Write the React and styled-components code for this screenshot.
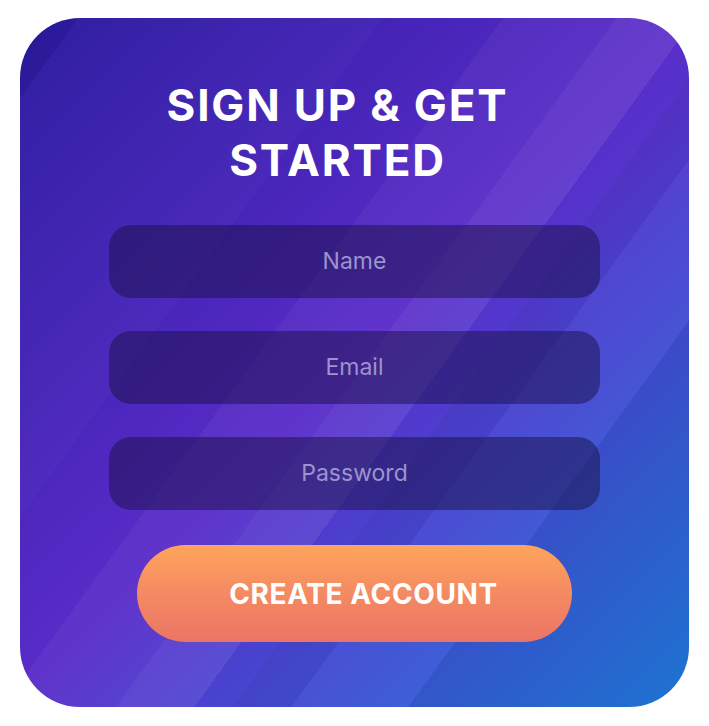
import React from "react";
import styled, { createGlobalStyle } from "styled-components";

const GlobalStyle = createGlobalStyle`
  html, body {
    margin: 0;
    padding: 0;
    background: #ffffff;
  }
  * {
    box-sizing: border-box;
  }
`;

const App = () => {
  return (
    <StPage>
      <GlobalStyle />
      <StCard>
        <StTitle>
          SIGN UP &amp; GET
          <br />
          STARTED
        </StTitle>
        <StForm onSubmit={(e) => e.preventDefault()}>
          <StInput type="text" placeholder="Name" />
          <StInput type="email" placeholder="Email" />
          <StInput type="password" placeholder="Password" />
          <StButton type="submit">CREATE ACCOUNT</StButton>
        </StForm>
      </StCard>
    </StPage>
  );
};

export default App;

const StPage = styled.div`
  padding: 18px 20px 19px 20px;
  font-family: Inter, "Open Sans", sans-serif;
`;

const StCard = styled.div`
  width: 669px;
  height: 689px;
  border-radius: 60px;
  display: flex;
  flex-direction: column;
  align-items: center;
  padding-top: 60px;
  overflow: hidden;
  background:
    linear-gradient(
      126deg,
      rgba(0, 0, 0, 0.06) 0 5%,
      rgba(255, 255, 255, 0.02) 5% 31%,
      transparent 31% 41.3%,
      rgba(255, 255, 255, 0.04) 41.3% 51%,
      rgba(255, 255, 255, 0.08) 51% 57.7%,
      transparent 57.7% 61%,
      rgba(0, 0, 0, 0.04) 61% 66%,
      rgba(255, 255, 255, 0.03) 66% 76%,
      rgba(0, 0, 0, 0.06) 76% 100%
    ),
    linear-gradient(135deg, #2a1a9f 0%, #5a2cc9 50%, #1e7bdf 100%);
`;

const StTitle = styled.h1`
  margin: 0 34px 37px 0;
  color: #ffffff;
  font-family: Inter, "Open Sans", sans-serif;
  font-weight: 700;
  font-size: 44px;
  line-height: 55px;
  letter-spacing: 1.8px;
  text-align: center;
`;

const StForm = styled.form`
  display: flex;
  flex-direction: column;
  align-items: center;
  gap: 33px;
`;

const StInput = styled.input`
  width: 491px;
  height: 73px;
  border: none;
  outline: none;
  border-radius: 22px;
  background: rgba(25, 15, 70, 0.5);
  color: #ffffff;
  font-family: Inter, "Open Sans", sans-serif;
  font-size: 23px;
  text-align: center;
  padding: 0 20px 2px;

  &::placeholder {
    color: #9d93cf;
  }
`;

const StButton = styled.button`
  margin-top: 2px;
  width: 435px;
  height: 97px;
  border: none;
  border-radius: 49px;
  background: linear-gradient(180deg, #fea45d 0%, #f48a62 50%, #ec7465 100%);
  color: #ffffff;
  font-family: Inter, "Open Sans", sans-serif;
  font-weight: 700;
  font-size: 28px;
  letter-spacing: 0.6px;
  padding-left: 24px;
  cursor: pointer;
`;
